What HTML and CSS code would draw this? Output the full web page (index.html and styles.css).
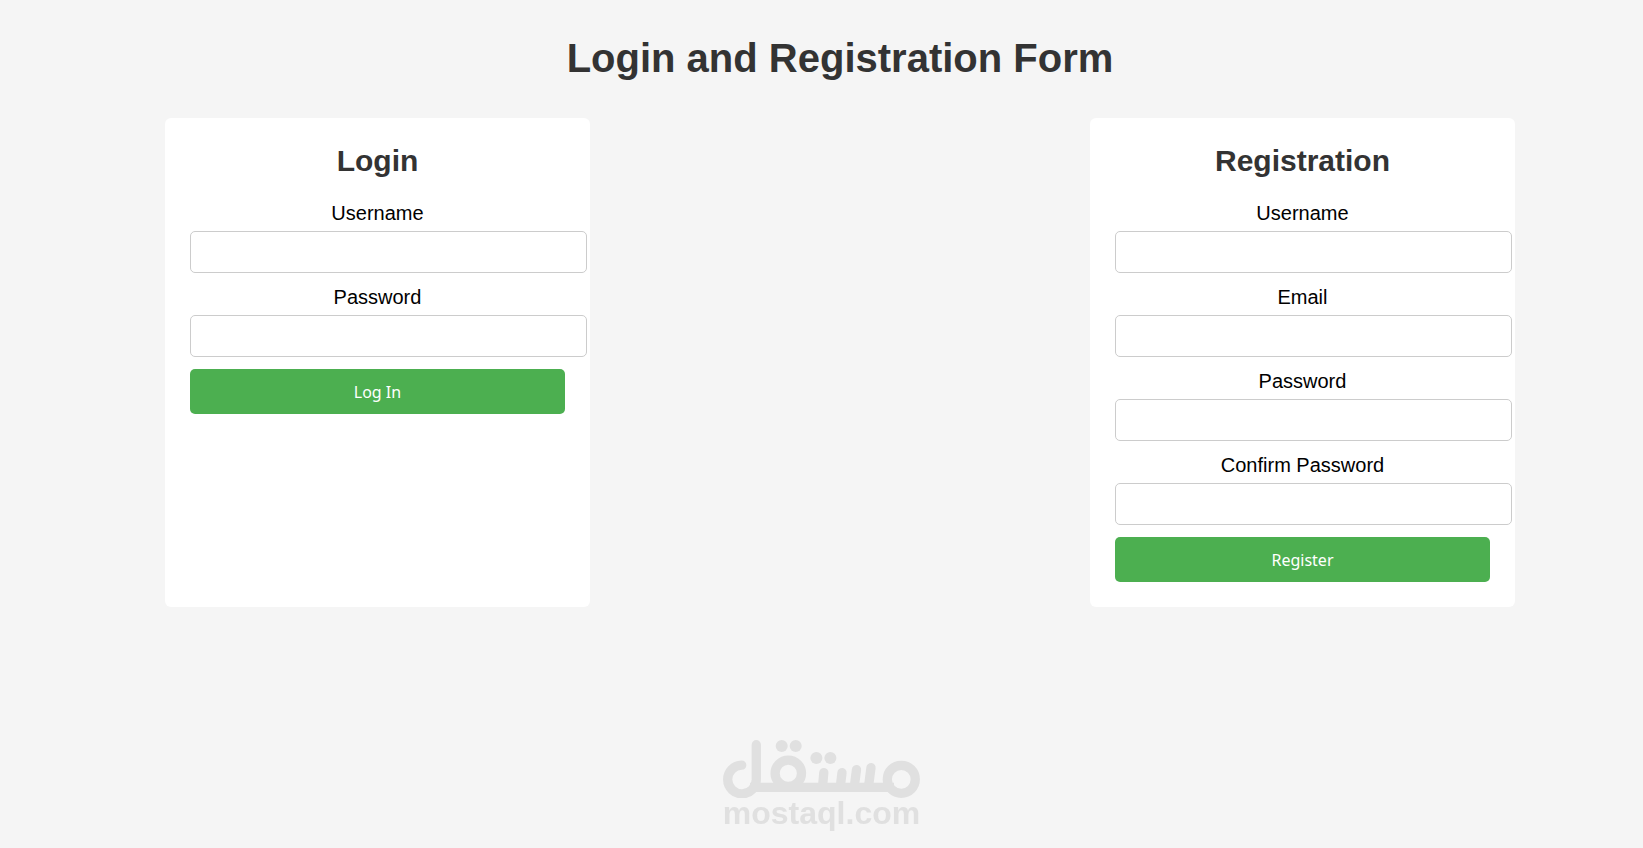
FILE: index.html
```html
<!DOCTYPE html>
<html lang="en">
<head>
  <meta charset="UTF-8" />
  <meta name="viewport" content="width=device-width, initial-scale=1" />
  <title>Login and Registration Form</title>
  <link rel="stylesheet" href="styles.css">
</head>
<body>
  <main class="container">
    <h1>Login and Registration Form</h1>

    <div class="forms">
      <form class="form-box">
        <h2>Login</h2>
        <label for="login-username">Username</label>
        <input type="text" id="login-username" name="username">
        <label for="login-password">Password</label>
        <input type="password" id="login-password" name="password">
        <button type="submit">Log In</button>
      </form>

      <form class="form-box">
        <h2>Registration</h2>
        <label for="reg-username">Username</label>
        <input type="text" id="reg-username" name="username">
        <label for="reg-email">Email</label>
        <input type="email" id="reg-email" name="email">
        <label for="reg-password">Password</label>
        <input type="password" id="reg-password" name="password">
        <label for="reg-confirm">Confirm Password</label>
        <input type="password" id="reg-confirm" name="confirm">
        <button type="submit">Register</button>
      </form>
    </div>
  </main>

  <div class="watermark">
    <svg class="watermark-logo" viewBox="23 20 197 58" aria-hidden="true">
      <g fill="none" stroke="currentColor" stroke-width="9.3" stroke-linecap="round" stroke-linejoin="round">
        <path d="M41.7 45.2A14.3 14.3 0 1 0 56.3 59.3V24.7" />
        <path d="M50 67.4H194" stroke-linecap="butt" />
        <circle cx="88.3" cy="53.3" r="13.2" />
        <circle cx="201.3" cy="59.3" r="14" />
        <path d="M123.8 52.6L122.6 66M142 52.6L140.4 66M156.5 49.6L154.4 66M171 47.6L168.6 66" />
      </g>
      <g fill="currentColor">
        <circle cx="81.7" cy="26" r="6" />
        <circle cx="95.7" cy="26" r="6" />
        <circle cx="116.4" cy="38" r="6" />
        <circle cx="130.4" cy="38" r="6" />
      </g>
    </svg>
    <span>mostaql.com</span>
  </div>
</body>
</html>
```

FILE: styles.css
```css
body {
  font-family: Arial, "Liberation Sans", sans-serif;
  margin: 0;
  padding: 0 0 0 37px;
  background: #f5f5f5;
  color: #000;
}

.container {
  width: 85%;
  max-width: 1350px;
  margin: 0 auto;
  padding-top: 35px;
}

h1 {
  margin: 0 0 37px;
  font-size: 40px;
  line-height: 46px;
  text-align: center;
  color: #333;
}

.forms {
  display: flex;
  flex-wrap: wrap;
  justify-content: space-between;
  gap: 24px;
}

.form-box {
  width: 375px;
  padding: 25px;
  background: #fff;
  border-radius: 6px;
  text-align: center;
}

h2 {
  margin: 0 0 22px;
  font-size: 30px;
  line-height: 36px;
  color: #333;
}

label {
  display: block;
  margin-bottom: 6px;
  font-size: 20px;
  line-height: 24px;
}

input {
  display: block;
  width: 100%;
  height: 20px;
  margin-bottom: 12px;
  padding: 10px;
  border: 1px solid #ccc;
  border-radius: 5px;
  font-size: 16px;
}

button {
  display: block;
  width: 100%;
  height: 45px;
  border: none;
  border-radius: 5px;
  background: #4caf50;
  color: #fff;
  font-family: "Noto Sans", sans-serif;
  font-size: 16px;
  cursor: pointer;
}

/* sits over the page, centered at the bottom of the window */
.watermark {
  position: fixed;
  left: 0;
  right: 0;
  bottom: 20px;
  display: flex;
  flex-direction: column;
  align-items: center;
  color: #e0e0e0;
  font-size: 32px;
  font-weight: bold;
  line-height: 30px;
  pointer-events: none;
}

.watermark-logo {
  width: 197px;
  height: 58px;
}
```
